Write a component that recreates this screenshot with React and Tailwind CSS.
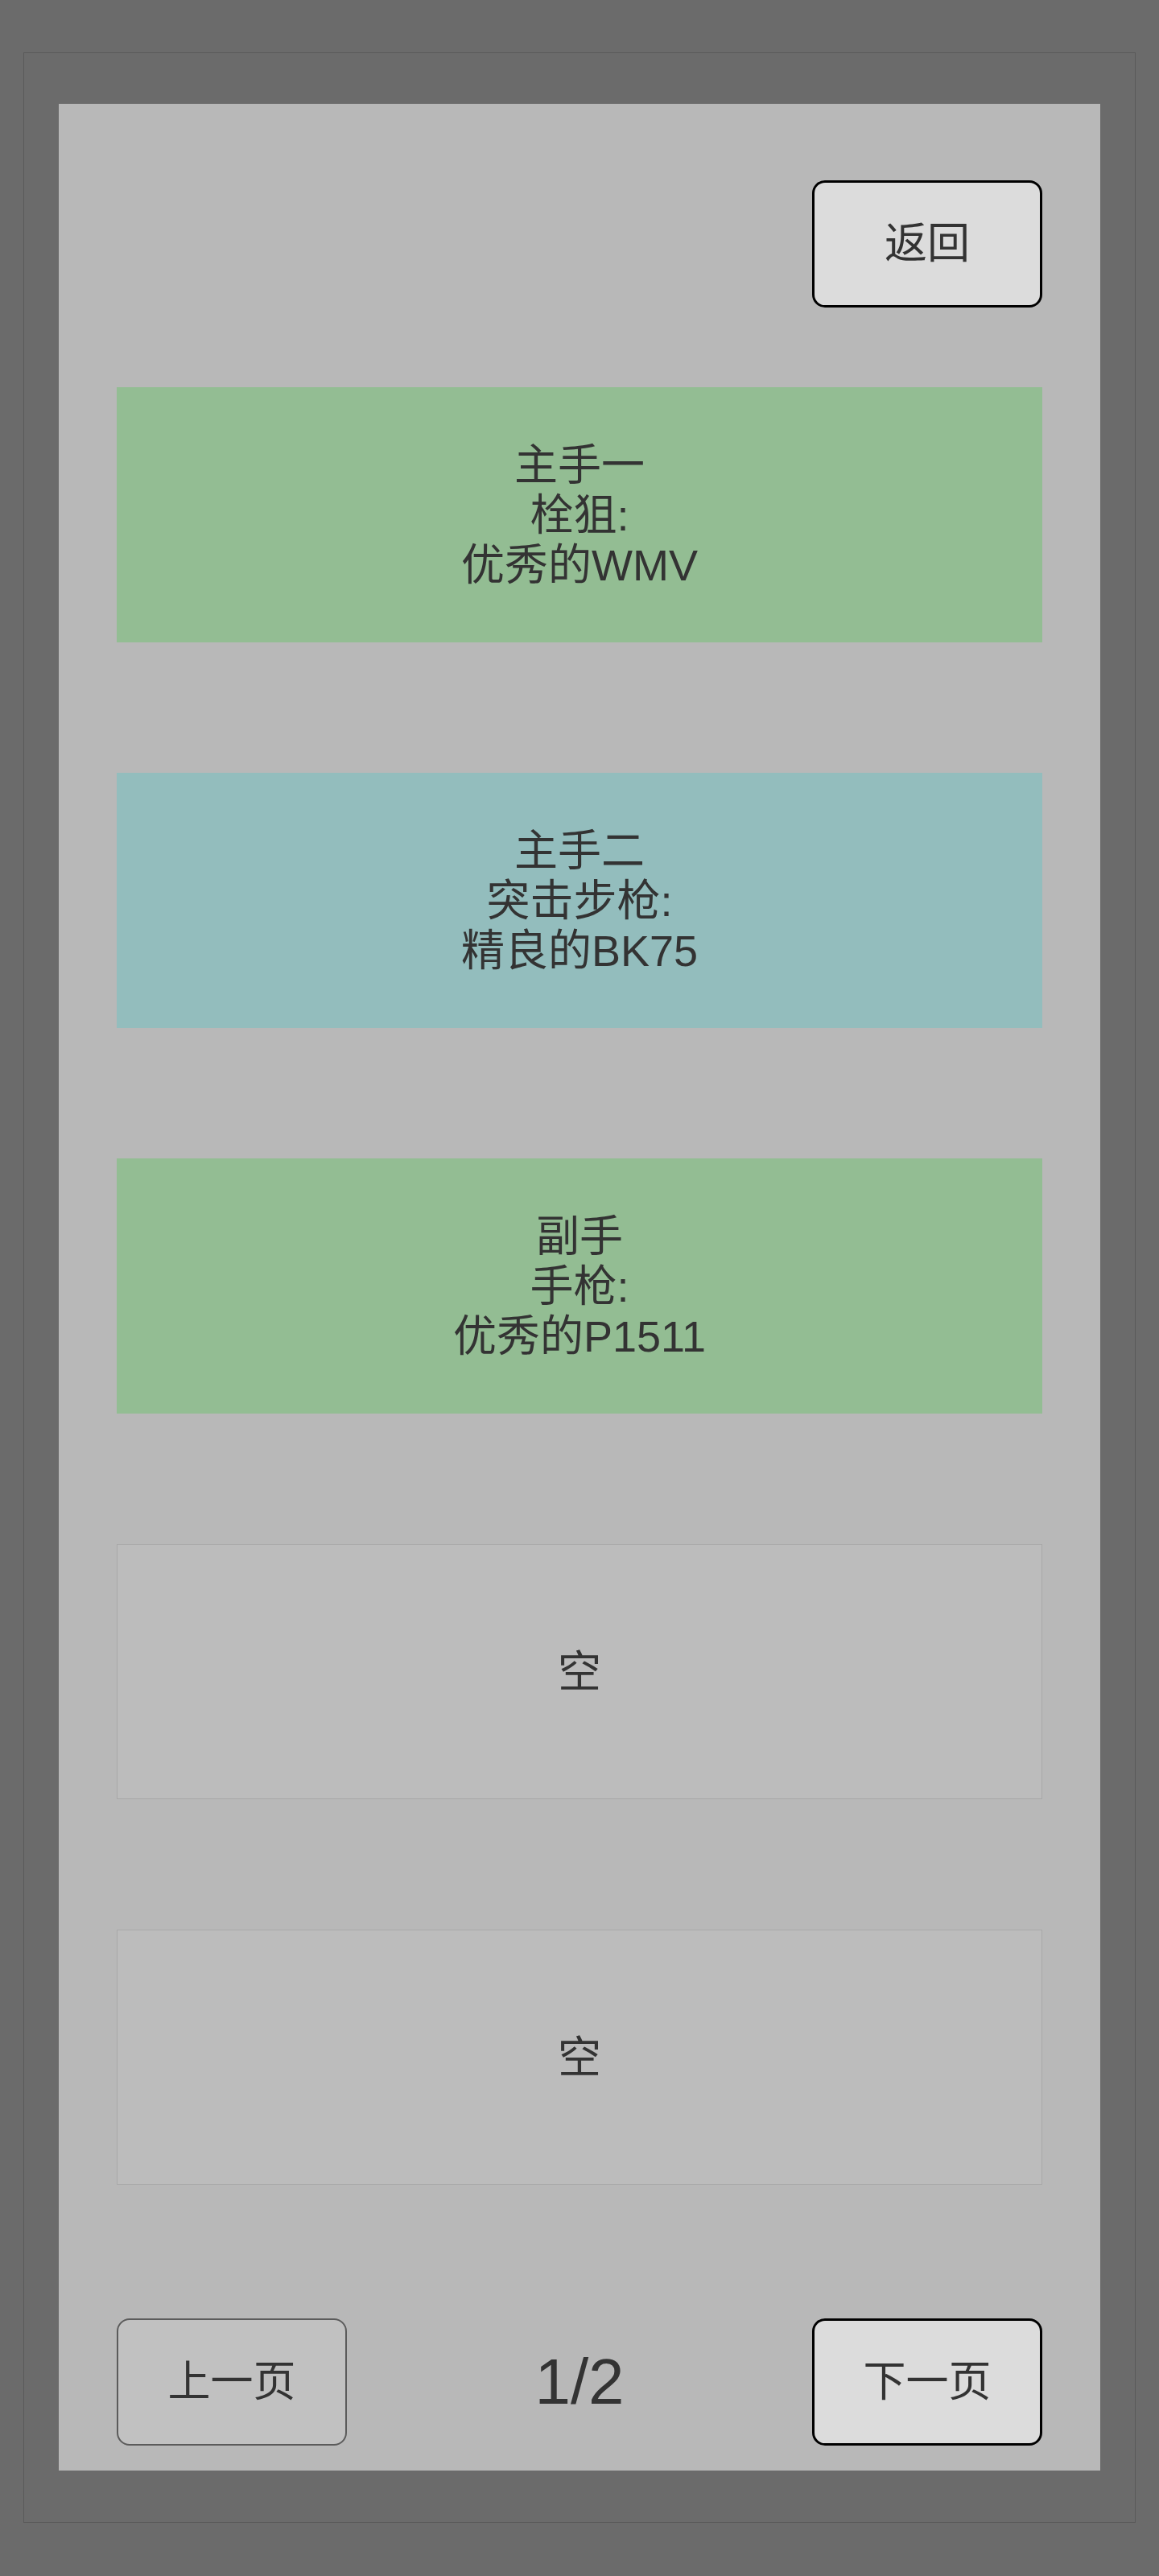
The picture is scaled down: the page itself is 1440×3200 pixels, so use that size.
const slots = [
  { lines: ["主手一", "栓狙:", "优秀的WMV"], tone: "bg-[#93bd93]" },
  { lines: ["主手二", "突击步枪:", "精良的BK75"], tone: "bg-[#93bdbd]" },
  { lines: ["副手", "手枪:", "优秀的P1511"], tone: "bg-[#93bd93]" },
  { lines: ["空"], tone: "bg-[#bcbcbc] border border-[#a8a8a8]" },
  { lines: ["空"], tone: "bg-[#bcbcbc] border border-[#a8a8a8]" },
];

const font = {
  fontFamily: '"Liberation Sans", "Noto Sans CJK SC", sans-serif',
};

function Slot({ lines, tone }) {
  return (
    <div
      className={`h-[317px] flex flex-col items-center justify-center text-[54px] leading-[62px] text-[#333333] ${tone}`}
    >
      {lines.map((l) => (
        <span key={l}>{l}</span>
      ))}
    </div>
  );
}

export default function App() {
  return (
    <div
      className="w-[1440px] h-[3200px] bg-[#6b6b6b] pt-[65px] px-[29px]"
      style={font}
    >
      <div className="h-[3069px] border border-[#5a5a5a] px-[43px] pt-[63px]">
        <div className="h-[2940px] bg-[#b8b8b8] flex flex-col pt-[95px] px-[72px] pb-[31px]">
          <div className="flex justify-end">
            <button className="w-[286px] h-[158px] rounded-[16px] border-[3px] border-black bg-[#dcdcdc] text-[53px] text-[#333333]">
              返回
            </button>
          </div>
          <div className="mt-[99px] flex flex-col gap-[162px]">
            {slots.map((s, i) => (
              <Slot key={i} {...s} />
            ))}
          </div>
          <div className="mt-auto flex items-center justify-between">
            <button className="w-[286px] h-[158px] rounded-[16px] border-2 border-[#5b5b5b] bg-[#c1c1c1] text-[53px] text-[#333333]">
              上一页
            </button>
            <span className="text-[80px] text-[#333333] leading-none">1/2</span>
            <button className="w-[286px] h-[158px] rounded-[16px] border-[3px] border-black bg-[#dcdcdc] text-[53px] text-[#333333]">
              下一页
            </button>
          </div>
        </div>
      </div>
    </div>
  );
}
